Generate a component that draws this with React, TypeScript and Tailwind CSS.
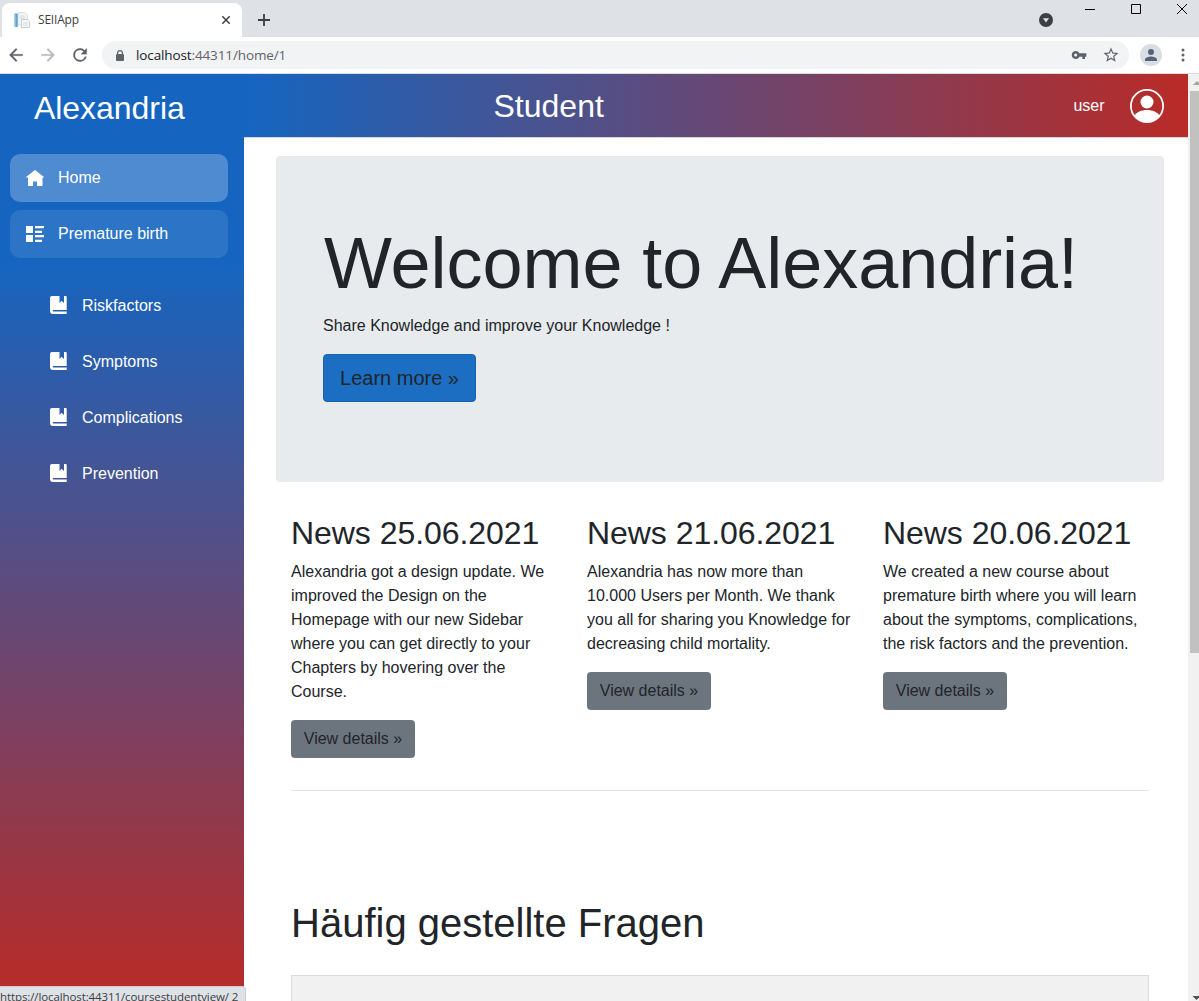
import React from "react";

function HomeIcon() {
  return (
    <svg viewBox="0 0 18 16" className="h-4 w-[18px] shrink-0 fill-white">
      <path d="M9 0L0 7v.5h2V16h5v-4.500h4V16h5.500V7.500H18V7z" />
    </svg>
  );
}

function ListIcon() {
  return (
    <svg viewBox="0 0 18 16" className="h-4 w-[18px] shrink-0 fill-white">
      <path d="M0 0h7v7H0zM9 0h9v2.300H9zM9 4.700h7V7H9zM0 9h7v7H0zM9 9h9v2.300H9zM9 13.700h7V16H9z" />
    </svg>
  );
}

function BookIcon() {
  return (
    <svg viewBox="0 0 18 18" className="h-[18px] w-[18px] shrink-0 fill-white">
      <path d="M2 0h7.500v7l2.250-2.250L14 7V0h1.500c.7 0 1.200.4 1.200 1.100V14H3.500a.8.8 0 0 0 0 1.600H16.700V18H3a3 3 0 0 1-3-3V2a2 2 0 0 1 2-2z" />
    </svg>
  );
}

function MaterialIcon({ d, className }: { d: string; className: string }) {
  return (
    <svg viewBox="0 0 24 24" className={`shrink-0 ${className}`}>
      <path d={d} />
    </svg>
  );
}

function TabStrip() {
  return (
    <div className="flex h-[37px] shrink-0 bg-[#dee1e6]">
      <div className="mt-[3px] ml-[2px] flex h-[34px] w-[240px] items-center rounded-t-lg bg-white pl-3">
        <svg viewBox="0 0 16 16" className="h-4 w-4 shrink-0">
          <path d="M4 .5h7l2.500 2.500v10h-9.500z" fill="#f3f5f7" stroke="#d5dade" strokeWidth=".8" />
          <path d="M7.500 7.500h6l2 2v6h-8z" fill="#f6f8fa" stroke="#b9c1c8" strokeWidth=".8" />
          <path d="M9 11h5M9 13h5M5.500 4h5M5.500 6h6" stroke="#ccd3d9" strokeWidth=".8" />
          <path d="M.5 1.500h3.200v13.500h-3.200z" fill="#5ba4cf" />
          <path d="M.5 1.500h1v13.500h-1z" fill="#a9cfe6" />
        </svg>
        <span className="ml-2 text-[12px] tracking-[-0.2px] text-[#3c4043]">SEIIApp</span>
        <svg viewBox="0 0 8 8" className="mr-[12px] ml-auto h-2 w-2" stroke="#3c4043" strokeWidth="1.5">
          <path d="M.3 .3l7.4 7.4M7.7 .3l-7.4 7.4" />
        </svg>
      </div>
      <svg viewBox="0 0 12 12" className="mt-[14px] ml-4 h-3 w-3" stroke="#3c4043" strokeWidth="1.8">
        <path d="M6 0v12M0 6h12" />
      </svg>
      <svg viewBox="0 0 14 14" className="mt-[13px] ml-auto h-[14px] w-[14px]">
        <circle cx="7" cy="7" r="7" fill="#3c4043" />
        <path d="M4 5.200h6l-3 4.300z" fill="#dee1e6" />
      </svg>
      <svg viewBox="0 0 10 10" className="mt-1 ml-8 h-[10px] w-[10px]" stroke="#000">
        <path d="M0 5.500h10" />
      </svg>
      <svg viewBox="0 0 10 10" className="mt-1 ml-9 h-[10px] w-[10px]" stroke="#000" fill="none">
        <path d="M.5 .5h9v9h-9z" />
      </svg>
      <svg viewBox="0 0 10 10" className="mt-1 mr-3 ml-9 h-[10px] w-[10px]" stroke="#000">
        <path d="M0 0l10 10M10 0l-10 10" />
      </svg>
    </div>
  );
}

function AddressBar() {
  return (
    <div className="flex h-[37px] shrink-0 items-center border-b border-[#dadce0] bg-white pl-[6px]">
      <MaterialIcon className="h-5 w-5 fill-[#5f6368] stroke-[#5f6368] stroke-[.3]" d="M20 11H7.830l5.590-5.590L12 4l-8 8 8 8 1.410-1.410L7.830 13H20v-2z" />
      <MaterialIcon className="ml-3 h-5 w-5 fill-[#bababd] stroke-[#bababd] stroke-[.3]" d="M12 4l-1.410 1.410L16.170 11H4v2h12.170l-5.580 5.590L12 20l8-8z" />
      <MaterialIcon className="ml-3 h-5 w-5 fill-[#5f6368] stroke-[#5f6368] stroke-[.3]" d="M17.650 6.350A7.950 7.950 0 0 0 12 4a8 8 0 1 0 7.730 10h-2.080A6 6 0 1 1 12 6c1.660 0 3.140.69 4.220 1.780L13 11h7V4l-2.350 2.350z" />
      <div className="ml-3 flex h-7 w-[1027px] items-center rounded-full bg-[#f1f3f4] pl-[14px]">
        <svg viewBox="0 0 8 11" className="h-[11px] w-2 fill-[#5f6368]">
          <path d="M1 4V3a3 3 0 0 1 6 0v1a1 1 0 0 1 1 1v5a1 1 0 0 1-1 1H1a1 1 0 0 1-1-1V5a1 1 0 0 1 1-1zm1.200 0h3.600V3a1.800 1.800 0 0 0-3.600 0z" />
        </svg>
        <span className="ml-3 text-[13.500px] tracking-[-0.12px] text-[#5f6368]">
          <span className="text-[#202124]">localhost</span>:44311/home/1
        </span>
        <MaterialIcon className="ml-auto h-4 w-4 fill-[#5f6368]" d="M12.650 9.500A6 6 0 0 0 7 6a6 6 0 1 0 5.650 8.500H17V18h4v-3.500h2v-5H12.650zM7 14.300a2.300 2.300 0 1 1 0-4.600 2.300 2.300 0 0 1 0 4.600z" />
        <MaterialIcon className="mr-[9px] ml-[15px] h-[18px] w-[18px] fill-[#5f6368]" d="M22 9.240l-7.190-.62L12 2 9.190 8.630 2 9.240l5.460 4.730L5.820 21 12 17.270 18.180 21l-1.630-7.030L22 9.240zM12 15.400l-3.760 2.270 1-4.280-3.320-2.880 4.380-.38L12 6.100l1.710 4.040 4.380.38-3.320 2.880 1 4.280L12 15.400z" />
      </div>
      <div className="ml-[11px] flex h-[22px] w-[22px] items-center justify-center rounded-full bg-[#dadde3]">
        <MaterialIcon className="h-[18px] w-[18px] fill-[#56617a]" d="M12 12a4 4 0 1 0 0-8 4 4 0 0 0 0 8zm0 2c-2.670 0-8 1.340-8 4v2h16v-2c0-2.660-5.330-4-8-4z" />
      </div>
      <svg viewBox="0 0 4 14" className="ml-[19px] h-[14px] w-1 fill-[#5f6368]">
        <circle cx="2" cy="2" r="1.500" />
        <circle cx="2" cy="7" r="1.500" />
        <circle cx="2" cy="12" r="1.500" />
      </svg>
    </div>
  );
}

function Sidebar() {
  const chapters = ["Riskfactors", "Symptoms", "Complications", "Prevention"];
  return (
    <aside className="flex w-[244px] shrink-0 flex-col bg-[linear-gradient(180deg,#1565c0_20%,#b92b27)] pl-[10px] text-white">
      <div className="mb-[22px] pt-[10px] pl-6 text-[32px] leading-[48px] tracking-[-0.05px]">Alexandria</div>
      <nav className="w-[218px]">
        <div className="mb-2 flex h-12 items-center rounded-[10px] bg-white/25 pl-4">
          <HomeIcon />
          <span className="ml-[14px]">Home</span>
        </div>
        <div className="mb-6 flex h-12 items-center rounded-[10px] bg-white/10 pl-4">
          <ListIcon />
          <span className="ml-[14px]">Premature birth</span>
        </div>
        {chapters.map((c) => (
          <div key={c} className="mb-2 flex h-12 items-center pl-10">
            <span className="-mt-[2px]">
              <BookIcon />
            </span>
            <span className="ml-[14px]">{c}</span>
          </div>
        ))}
      </nav>
    </aside>
  );
}

const news = [
  {
    date: "25.06.2021",
    text: "Alexandria got a design update. We improved the Design on the Homepage with our new Sidebar where you can get directly to your Chapters by hovering over the Course.",
  },
  {
    date: "21.06.2021",
    text: "Alexandria has now more than 10.000 Users per Month. We thank you all for sharing you Knowledge for decreasing child mortality.",
  },
  {
    date: "20.06.2021",
    text: "We created a new course about premature birth where you will learn about the symptoms, complications, the risk factors and the prevention.",
  },
];

function Main() {
  return (
    <main className="flex min-w-0 flex-1 flex-col bg-white">
      <header className="flex h-16 shrink-0 items-center border-b border-[#d6d5d5] bg-[linear-gradient(90deg,#1565c0,#b92b27)] pr-6 pl-[249.500px] text-white">
        <h1 className="text-[32px] leading-[38px]">Student</h1>
        <span className="mr-[25.500px] ml-auto">user</span>
        <svg viewBox="0 0 34 34" className="h-[34px] w-[34px]">
          <defs>
            <clipPath id="avatar">
              <circle cx="17" cy="17" r="16" />
            </clipPath>
          </defs>
          <g fill="#fff" clipPath="url(#avatar)">
            <circle cx="17" cy="13" r="6.500" />
            <path d="M4 27.500c2-4.500 8-6.500 13-6.500s11 2 13 6.500v7H4z" />
          </g>
          <circle cx="17" cy="17" r="16.100" fill="none" stroke="#fff" strokeWidth="1.800" />
        </svg>
      </header>
      <div className="pt-[18px] pl-8">
        <section className="h-[326px] w-[888px] rounded bg-[#e8ebee] px-[47px] pt-16">
          <h2 className="mb-2 pl-px text-[72px] leading-[86.400px] tracking-[-0.05px] whitespace-nowrap">Welcome to Alexandria!</h2>
          <p className="mb-4">Share Knowledge and improve your Knowledge !</p>
          <button className="h-12 w-[153px] rounded border border-[#1861ac] bg-[#1b6ec2] text-[20px]">Learn more »</button>
        </section>
        <section className="mt-8 grid w-[888px] grid-cols-3">
          {news.map((n) => (
            <article key={n.date} className="px-[15px]">
              <h2 className="mb-2 text-[32px] leading-[38.400px] tracking-[-0.05px] whitespace-nowrap">News {n.date}</h2>
              <p className="mb-4">{n.text}</p>
              <button className="block h-[38px] w-[124px] rounded bg-[#6c757d]">View details »</button>
            </article>
          ))}
        </section>
        <div className="ml-[15px] w-[858px]">
          <hr className="mt-8 border-[#e3e3e3]" />
          <h2 className="mt-[108px] text-[40px] leading-[48px]">Häufig gestellte Fragen</h2>
          <div className="mt-7 h-20 border border-[#dcdcdc] bg-[#f1f1f1]" />
        </div>
      </div>
    </main>
  );
}

function Scrollbar() {
  return (
    <div className="flex w-[11px] shrink-0 flex-col overflow-hidden bg-[#f1f1f1]">
      <svg viewBox="0 0 11 17" className="h-[17px] w-[11px] shrink-0 fill-[#a3a3a3]">
        <path d="M5 11l4-4 4 4z" />
      </svg>
      <div className="ml-[2px] h-[562px] bg-[#c1c1c1]" />
      <svg viewBox="0 0 11 17" className="mt-auto h-[17px] w-[11px] shrink-0 fill-[#505050]">
        <path d="M4.500 12h8l-4 4z" />
      </svg>
    </div>
  );
}

export default function App() {
  return (
    <div className="relative flex h-[1001px] w-[1199px] flex-col overflow-hidden bg-white font-['Open_Sans',sans-serif]">
      <TabStrip />
      <AddressBar />
      <div className="flex min-h-0 flex-1 overflow-hidden font-['Liberation_Sans',Arial,sans-serif] text-base leading-6 text-[#212529]">
        <Sidebar />
        <Main />
        <Scrollbar />
      </div>
      <div className="absolute bottom-0 left-0 h-[15px] w-[246px] rounded-tr border-t border-r border-[#c9ccd1] bg-[#dee1e6] text-[11.500px] leading-[20px] tracking-[-0.1px] whitespace-nowrap text-[#3c4043]">
        https://localhost:44311/coursestudentview/ 2
      </div>
    </div>
  );
}
